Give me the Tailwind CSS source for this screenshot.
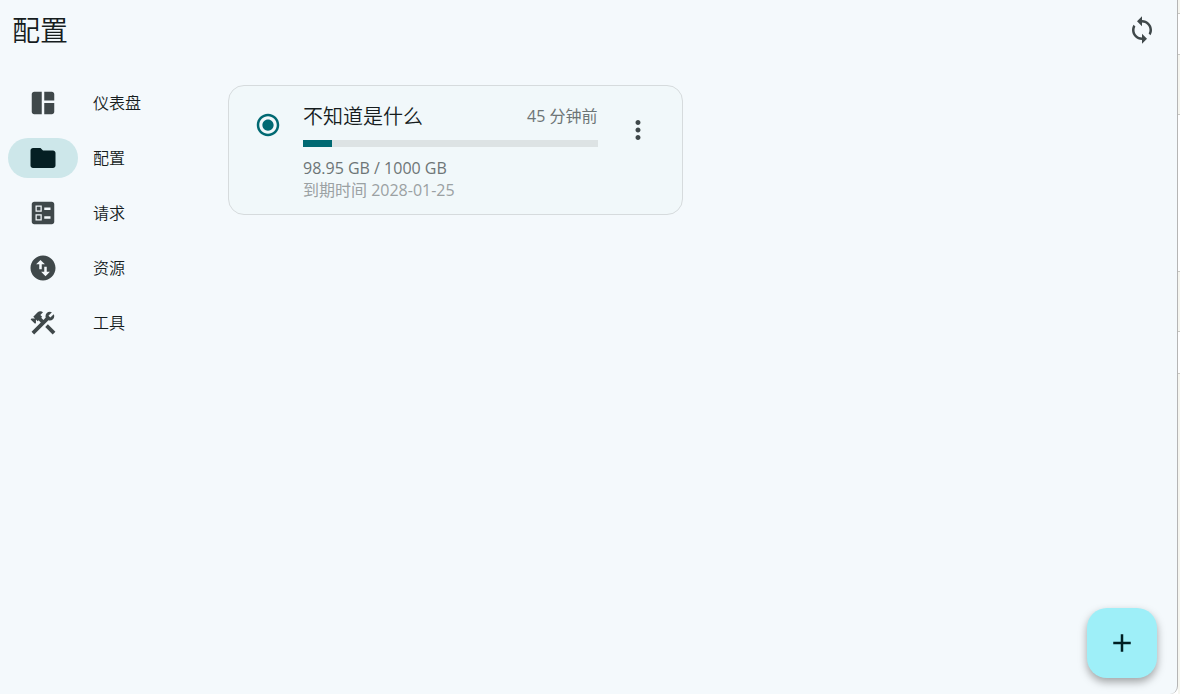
<!DOCTYPE html>
<html lang="zh-CN">
<head>
  <meta charset="UTF-8" />
  <meta name="viewport" content="width=device-width, initial-scale=1.0" />
  <title>配置</title>
  <script src="https://cdn.jsdelivr.net/npm/@tailwindcss/browser@4"></script>
</head>
<body class="flex min-h-screen bg-white font-['Open_Sans','Noto_Sans_CJK_SC',sans-serif] font-[350] text-[#161d1e]">

  <div class="flex flex-1 flex-col rounded-br-lg border-r border-[#b5b5b5] bg-[#f4f9fc]">
    <header class="flex h-15 items-center justify-between pr-[15px] pl-3">
      <h1 class="text-[28px] leading-10">配置</h1>
      <button type="button" aria-label="同步" class="flex size-10 items-center justify-center text-[#3f484a]">
        <svg class="size-[30px]" viewBox="0 0 24 24" fill="currentColor"><path d="M12 4V1L8 5l4 4V6c3.31 0 6 2.69 6 6 0 1.01-.25 1.97-.7 2.8l1.46 1.46C19.54 15.03 20 13.57 20 12c0-4.42-3.58-8-8-8zm0 14c-3.31 0-6-2.69-6-6 0-1.01.25-1.97.7-2.8L5.24 7.74C4.46 8.97 4 10.43 4 12c0 4.42 3.58 8 8 8v3l4-4-4-4v3z"/></svg>
      </button>
    </header>

    <div class="flex flex-1">
      <nav class="flex w-52 shrink-0 flex-col gap-[15px] pt-[23px] pl-2 text-base">
        <a href="#dashboard" class="flex items-center gap-[15px]">
          <span class="flex h-10 w-[70px] items-center justify-center rounded-full text-[#3f484a]">
            <svg class="size-[30px]" viewBox="0 0 24 24" fill="currentColor"><path d="M11 21H5c-1.100 0-2-.9-2-2V5c0-1.100.9-2 2-2h6v18zm2 0h6c1.100 0 2-.9 2-2v-7h-8v9zm8-11V5c0-1.100-.9-2-2-2h-6v7h8z"/></svg>
          </span>
          <span>仪表盘</span>
        </a>
        <a href="#profiles" aria-current="page" class="flex items-center gap-[15px]">
          <span class="flex h-10 w-[70px] items-center justify-center rounded-full bg-[#cde7ea] text-[#051f23]">
            <svg class="size-[30px]" viewBox="0 0 24 24" fill="currentColor"><path d="M10 4H4c-1.100 0-1.990.9-1.990 2L2 18c0 1.100.9 2 2 2h16c1.100 0 2-.9 2-2V8c0-1.100-.9-2-2-2h-8l-2-2z"/></svg>
          </span>
          <span>配置</span>
        </a>
        <a href="#requests" class="flex items-center gap-[15px]">
          <span class="flex h-10 w-[70px] items-center justify-center rounded-full text-[#3f484a]">
            <svg class="size-[30px]" viewBox="0 0 24 24" fill="currentColor"><path d="M13 9.500h5v-2h-5v2zm0 7h5v-2h-5v2zm6 4.500H5c-1.100 0-2-.9-2-2V5c0-1.100.9-2 2-2h14c1.100 0 2 .9 2 2v14c0 1.100-.9 2-2 2zM6 11h5V6H6v5zm1-4h3v3H7V7zM6 18h5v-5H6v5zm1-4h3v3H7v-3z"/></svg>
          </span>
          <span>请求</span>
        </a>
        <a href="#resources" class="flex items-center gap-[15px]">
          <span class="flex h-10 w-[70px] items-center justify-center rounded-full text-[#3f484a]">
            <svg class="size-[30px]" viewBox="0 0 24 24" fill="currentColor"><path d="M12 2C6.480 2 2 6.480 2 12s4.480 10 10 10 10-4.480 10-10S17.520 2 12 2zM6.500 9L10 5.500 13.500 9H11v4H9V9H6.500zm11 6L14 18.500 10.500 15H13v-4h2v4h2.500z"/></svg>
          </span>
          <span>资源</span>
        </a>
        <a href="#tools" class="flex items-center gap-[15px]">
          <span class="flex h-10 w-[70px] items-center justify-center rounded-full text-[#3f484a]">
            <svg class="size-[30px]" viewBox="0 0 24 24" fill="currentColor">
              <path d="M13.783 15.172l2.121-2.121 5.996 5.996-2.121 2.121z"/>
              <path d="M17.500 10c1.930 0 3.500-1.570 3.500-3.500 0-.58-.16-1.120-.41-1.600l-2.700 2.700-1.490-1.490 2.700-2.700c-.48-.25-1.020-.41-1.600-.41C15.570 3 14 4.570 14 6.500c0 .41.080.8.210 1.160l-1.850 1.850-1.780-1.780.71-.71-1.410-1.410L12 3.490c-1.170-1.170-3.070-1.170-4.240 0L4.220 7.030l1.410 1.410H2.810L2.100 9.150l3.540 3.540.71-.71V9.150l1.410 1.410.71-.71 1.780 1.780-7.410 7.410 2.120 2.120L16.340 9.790c.36.130.75.210 1.160.21z"/>
            </svg>
          </span>
          <span>工具</span>
        </a>
      </nav>

      <main class="grid flex-1 grid-cols-2 content-start gap-5 px-5 pt-[25px]">
        <article class="flex rounded-2xl border border-[#d6dbdd] bg-[#f1f8fa] px-6 pt-4 pb-[13px]">
          <label class="flex h-[46px] w-[50px] shrink-0 items-center text-[#006972]">
            <input type="radio" name="profile" checked aria-label="不知道是什么" class="sr-only" />
            <svg class="size-[30px]" viewBox="0 0 24 24" fill="currentColor"><path d="M12 7.500c-2.500 0-4.500 2-4.500 4.500s2 4.500 4.500 4.500 4.500-2 4.500-4.500-2-4.500-4.500-4.500zM12 3c-4.970 0-9 4.030-9 9s4.030 9 9 9 9-4.030 9-9-4.030-9-9-9zm0 16c-3.870 0-7-3.130-7-7s3.130-7 7-7 7 3.130 7 7-3.130 7-7 7z"/></svg>
          </label>
          <div class="flex-1">
            <div class="flex items-start justify-between">
              <h2 class="text-xl leading-[30px]">不知道是什么</h2>
              <time class="text-base leading-7 font-normal text-[#6d7576]">45 分钟前</time>
            </div>
            <div role="progressbar" aria-label="已用流量" aria-valuemin="0" aria-valuemax="1000" aria-valuenow="98.95" class="mt-2 h-[7px] bg-[#dde3e4]">
              <div class="h-full bg-[#006972]" style="width: 9.895%"></div>
            </div>
            <p class="mt-[10px] text-base leading-[22px] font-normal text-[#6d7576]">98.95 GB / 1000 GB</p>
            <p class="text-base leading-[22px] font-normal text-[#9ba1a3]">到期时间 2028-01-25</p>
          </div>
          <button type="button" aria-label="更多" class="ml-5 flex h-14 w-10 shrink-0 items-center justify-center text-[#3f484a]">
            <svg class="size-[30px]" viewBox="0 0 24 24" fill="currentColor"><path d="M12 8c1.100 0 2-.9 2-2s-.9-2-2-2-2 .9-2 2 .9 2 2 2zm0 2c-1.100 0-2 .9-2 2s.9 2 2 2 2-.9 2-2-.9-2-2-2zm0 6c-1.100 0-2 .9-2 2s.9 2 2 2 2-.9 2-2-.9-2-2-2z"/></svg>
          </button>
        </article>
      </main>
    </div>
  </div>

  <!-- window behind the app -->
  <div class="flex w-[2px] flex-col" aria-hidden="true">
    <div class="h-[14px] border-b border-[#c9c9c4] bg-[#f6f6f0]"></div>
    <div class="h-[41px] border-b border-[#c9c9c4]"></div>
    <div class="h-[60px] border-b border-[#c9c9c4] bg-[#f6f6f0]"></div>
    <div class="h-[157px] border-b border-[#c9c9c4]"></div>
    <div class="h-[60px] border-b border-[#c9c9c4] bg-[#f6f6f0]"></div>
    <div class="h-[42px] border-b border-[#c9c9c4]"></div>
    <div class="flex-1 bg-[#f6f6f0]"></div>
  </div>

  <button type="button" aria-label="添加" class="fixed right-[23px] bottom-4 flex size-[70px] items-center justify-center rounded-[20px] bg-[#9eeff8] text-[#001f23] shadow-[0_4px_8px_rgba(0,0,0,0.35)]">
    <svg class="size-[30px]" viewBox="0 0 24 24" fill="currentColor"><path d="M19 13h-6v6h-2v-6H5v-2h6V5h2v6h6v2z"/></svg>
  </button>

</body>
</html>
